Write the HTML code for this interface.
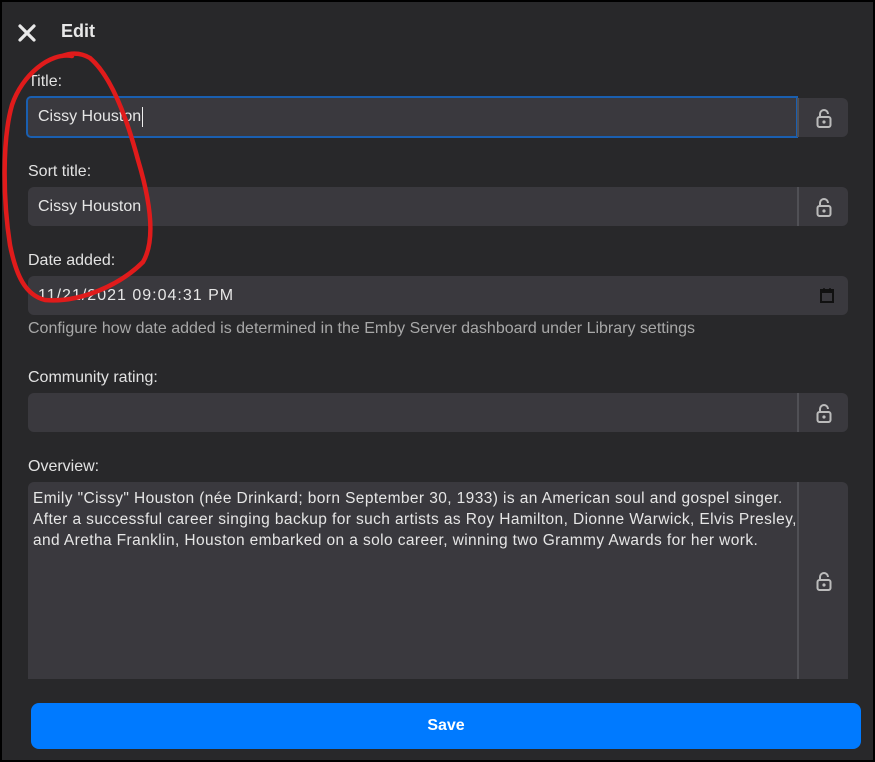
<!DOCTYPE html>
<html><head><meta charset="utf-8"><style>
*{box-sizing:border-box;margin:0;padding:0}
html,body{width:875px;height:762px;overflow:hidden;background:#000}
body{font-family:"Liberation Sans",Arial,sans-serif;color:#e0e0e0}
.frame{position:absolute;left:2px;top:2px;width:871px;height:758px;background:#28282a}
.abs{position:absolute}
.lbl{position:absolute;left:28px;font-size:16px;color:#e2e2e2}
.field{position:absolute;left:28px;background:#3a393e;border-radius:6px 0 0 6px;font-size:16px;color:#e6e6e6;padding-left:10px;display:flex;align-items:center}
.lock{position:absolute;left:797px;width:51px;background:#3a393e;border-radius:0 6px 6px 0;border-left:2px solid #505055;display:flex;align-items:center;justify-content:center}
</style></head><body>
<div class="frame"></div>
<svg class="abs" style="left:17px;top:23px" width="20" height="20" viewBox="0 0 20 20"><path d="M3 3L17 17M17 3L3 17" stroke="#e8e8e8" stroke-width="3.2" stroke-linecap="round"/></svg>
<div class="abs" style="left:61px;top:21px;font-size:18px;font-weight:bold;color:#e8e8e8">Edit</div>

<div class="lbl" style="top:73px">Title:</div>
<div class="field" style="left:26px;top:96px;width:772px;height:42px;border:2px solid #1a5fb0;border-radius:5px 0 0 5px;padding-left:10px">Cissy Houston<span style="display:inline-block;width:1px;height:20px;background:#eee;margin-left:1px"></span></div>
<div class="lock" style="top:98px;height:39px"><svg width="16" height="20" viewBox="0 0 16 20"><path d="M4 9V6a4 4 0 0 1 8 0" fill="none" stroke="#bbb" stroke-width="2"/><rect x="1.5" y="9" width="13" height="10" rx="2" fill="none" stroke="#bbb" stroke-width="2"/><circle cx="8" cy="14" r="1.6" fill="#bbb"/></svg></div>

<div class="lbl" style="top:163px">Sort title:</div>
<div class="field" style="top:187px;width:769px;height:39px">Cissy Houston</div>
<div class="lock" style="top:187px;height:39px"><svg width="16" height="20" viewBox="0 0 16 20"><path d="M4 9V6a4 4 0 0 1 8 0" fill="none" stroke="#bbb" stroke-width="2"/><rect x="1.5" y="9" width="13" height="10" rx="2" fill="none" stroke="#bbb" stroke-width="2"/><circle cx="8" cy="14" r="1.6" fill="#bbb"/></svg></div>

<div class="lbl" style="top:252px">Date added:</div>
<div class="field" style="top:276px;width:820px;height:39px;border-radius:6px;font-size:16px;letter-spacing:1px">11/21/2021 09:04:31 PM</div>
<svg class="abs" style="left:820px;top:287px" width="14" height="16" viewBox="0 0 14 16"><rect x="1" y="3" width="12" height="12" fill="none" stroke="#111" stroke-width="2"/><rect x="1" y="3" width="12" height="3" fill="#111"/><path d="M4 1v3M10 1v3" stroke="#111" stroke-width="1.5"/></svg>
<div class="abs" style="left:28px;top:320px;font-size:16px;color:#a8a8a8">Configure how date added is determined in the Emby Server dashboard under Library settings</div>

<div class="lbl" style="top:369px">Community rating:</div>
<div class="field" style="top:393px;width:769px;height:39px"></div>
<div class="lock" style="top:393px;height:39px"><svg width="16" height="20" viewBox="0 0 16 20"><path d="M4 9V6a4 4 0 0 1 8 0" fill="none" stroke="#bbb" stroke-width="2"/><rect x="1.5" y="9" width="13" height="10" rx="2" fill="none" stroke="#bbb" stroke-width="2"/><circle cx="8" cy="14" r="1.6" fill="#bbb"/></svg></div>

<div class="lbl" style="top:458px">Overview:</div>
<div class="abs" style="left:28px;top:482px;width:769px;height:197px;background:#3a393e;border-radius:6px 0 0 0;padding:6px 0 0 5px;font-size:15.5px;letter-spacing:0.4px;line-height:21px;color:#e6e6e6;white-space:nowrap;overflow:hidden">Emily "Cissy" Houston (née Drinkard; born September 30, 1933) is an American soul and gospel singer.<br>After a successful career singing backup for such artists as Roy Hamilton, Dionne Warwick, Elvis Presley,<br>and Aretha Franklin, Houston embarked on a solo career, winning two Grammy Awards for her work.</div>
<div class="lock" style="top:482px;height:197px;border-radius:0 6px 0 0"><svg width="16" height="20" viewBox="0 0 16 20"><path d="M4 9V6a4 4 0 0 1 8 0" fill="none" stroke="#bbb" stroke-width="2"/><rect x="1.5" y="9" width="13" height="10" rx="2" fill="none" stroke="#bbb" stroke-width="2"/><circle cx="8" cy="14" r="1.6" fill="#bbb"/></svg></div>

<div class="abs" style="left:31px;top:703px;width:830px;height:46px;background:#007aff;border-radius:8px;display:flex;align-items:center;justify-content:center;font-size:16px;font-weight:bold;color:#fff">Save</div>

<svg class="abs" style="left:0;top:0" width="875" height="762" viewBox="0 0 875 762"><path d="M72 56C50 52 22 75 12 105C2 140 3 200 10 245C16 275 25 295 45 300C80 303 120 285 143 262C156 240 150 200 138 160C126 115 110 75 90 58C80 52 70 53 62 56" fill="none" stroke="#e01b1b" stroke-width="4.5" stroke-linecap="round"/></svg>
</body></html>
